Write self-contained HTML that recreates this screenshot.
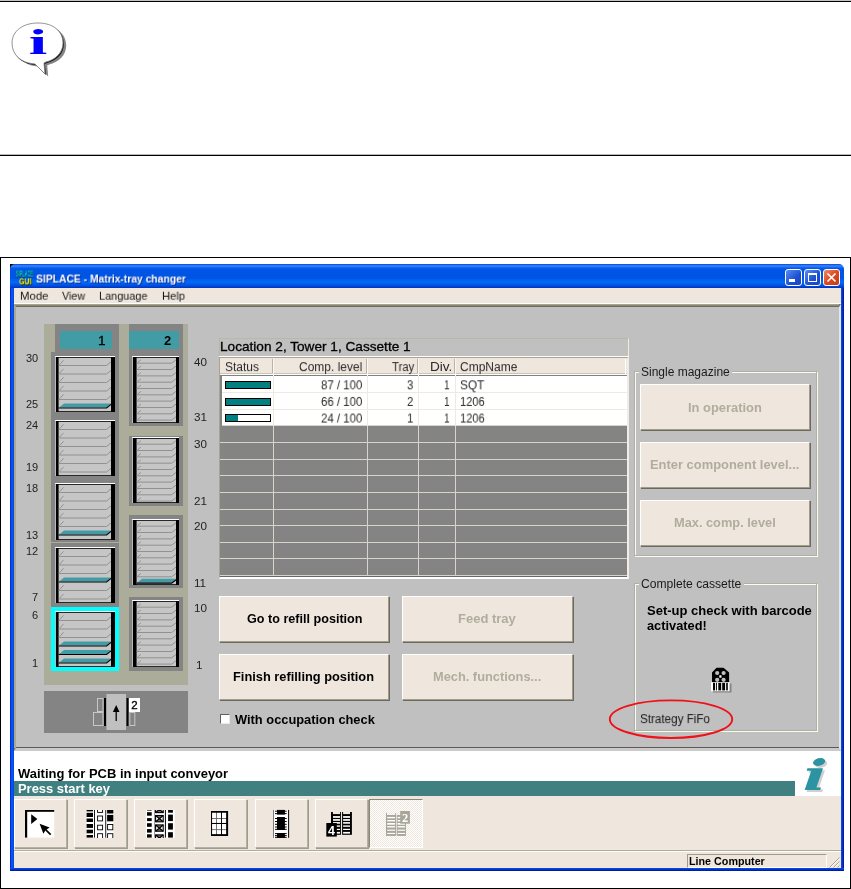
<!DOCTYPE html><html><head><meta charset="utf-8"><title>SIPLACE - Matrix-tray changer</title><style>
*{margin:0;padding:0;box-sizing:border-box}
html,body{width:851px;height:889px;background:#fff;overflow:hidden}
body{position:relative;font-family:"Liberation Sans",sans-serif;font-size:11px;color:#000}
.a{position:absolute}
.t{position:absolute;white-space:nowrap;line-height:1;will-change:transform}
.btn{position:absolute;background:#efe7de;border:1px solid;border-color:#fff #a09c8a #a09c8a #fff;box-shadow:1px 1px 0 #6e6860}
.tb{border-color:#fff #b4b0a2 #b4b0a2 #fff;box-shadow:1px 1px 0 #9e9a8c}
</style></head><body>
<div class="a" style="left:0;top:0;width:851px;height:1px;background:#c4c4c4"></div>
<div class="a" style="left:0;top:1px;width:851px;height:1px;background:#000"></div>
<div class="a" style="left:0;top:154px;width:851px;height:1px;background:#b8b8b8"></div>
<div class="a" style="left:0;top:155px;width:851px;height:1px;background:#000"></div>
<svg class="a" style="will-change:transform;left:8px;top:18px" width="64" height="62" viewBox="0 0 64 62">
<path d="M4 25 C4 13 15 5 30 5 C45 5 55 13 55 25 C55 35 47 42 38 44 L36 45 L37 56 L27 46 C13 45 4 37 4 25 Z" fill="#858585" transform="translate(3.2,2.6)"/>
<path d="M4 25 C4 13 15 5 30 5 C45 5 55 13 55 25 C55 35 47 42 38 44 L36 45 L37 56 L27 46 C13 45 4 37 4 25 Z" fill="#111" transform="translate(0.9,0.9)"/>
<path d="M4 25 C4 13 15 5 30 5 C45 5 55 13 55 25 C55 35 47 42 38 44 L36 45 L37 56 L27 46 C13 45 4 37 4 25 Z" fill="#fff" stroke="#777" stroke-width="0.8"/>
<text transform="translate(30,35.8) scale(1.9,1)" x="0" y="0" font-family="Liberation Serif,serif" font-weight="bold" font-size="35" fill="#0000ff" text-anchor="middle">i</text>
</svg>
<div class="a" style="left:0;top:257px;width:851px;height:632px;border:1px solid #000"></div>
<div class="a" style="left:10px;top:264px;width:834px;height:607px;background:#0a44e2"></div>
<div class="a" style="left:10px;top:264px;width:4px;height:607px;background:linear-gradient(90deg,#0019cf,#0a5cf5 45%,#0044e0)"></div>
<div class="a" style="left:841px;top:264px;width:3px;height:607px;background:linear-gradient(90deg,#0a50ee,#0030c8 55%,#00138c)"></div>
<div class="a" style="left:10px;top:868px;width:834px;height:3px;background:linear-gradient(#0a50ee,#0030c8 55%,#00138c)"></div>
<div class="a" style="left:10px;top:264px;width:6px;height:6px;background:#000"></div>
<div class="a" style="left:838px;top:264px;width:6px;height:6px;background:#fff"></div>
<div class="a" style="left:10px;top:264px;width:834px;height:24px;border-radius:5px 5px 0 0;background:linear-gradient(#0a48d8 0,#1c60ee 4%,#3a8cff 8%,#1468f0 14%,#0055e5 21%,#0054e3 60%,#0060f0 65%,#0468f6 76%,#005ae8 85%,#0048d8 93%,#0030c0 100%)"></div>
<div class="t" style="top:268px;line-height:10px;font-size:9px;color:#10d0a8;font-weight:bold;left:16.00px;transform-origin:0 50%;transform:translateY(0.52px) scaleX(0.4358);text-shadow:0.5px 0.5px 0 #003a60;">SIPLACE</div>
<div class="t" style="top:276px;line-height:10px;font-size:8.5px;color:#f0f000;font-weight:bold;left:18.60px;transform-origin:0 50%;transform:translateY(0.34px) scaleX(0.8206);text-shadow:0.7px 0.7px 0 #202000;">GUI</div>
<div class="t" style="top:272px;line-height:12px;font-size:11px;color:#fff;font-weight:bold;left:36.20px;transform-origin:0 50%;transform:translateY(0.54px) scaleX(0.9390);text-shadow:1px 1px 0 #0a2a90;">SIPLACE - Matrix-tray changer</div>
<div class="a" style="left:785px;top:269px;width:17px;height:17px;border:1px solid #fff;border-radius:3px;background:linear-gradient(135deg,#5a8cf4,#1c4fd2 60%,#1a48c0)"><div class="a" style="left:3px;top:9px;width:6px;height:3px;background:#fff"></div></div>
<div class="a" style="left:804px;top:269px;width:17px;height:17px;border:1px solid #fff;border-radius:3px;background:linear-gradient(135deg,#5a8cf4,#1c4fd2 60%,#1a48c0)"><div class="a" style="left:3px;top:2.5px;width:9px;height:9px;border:1px solid #fff;border-top-width:2.5px"></div></div>
<div class="a" style="left:823px;top:269px;width:17px;height:17px;border:1px solid #fff;border-radius:3px;background:linear-gradient(135deg,#f08a64,#dc4a22 50%,#c43a14)"><svg class="a" style="will-change:transform;left:0;top:0" width="15" height="15"><path d="M3.5 3.5 L11.5 11.5 M11.5 3.5 L3.5 11.5" stroke="#fff" stroke-width="1.7"/></svg></div>
<div class="a" style="left:14px;top:288px;width:827px;height:15px;background:#efe7de"></div>
<div class="t" style="top:289px;line-height:12px;font-size:11.5px;color:#151515;left:20.00px;transform-origin:0 50%;transform:translateY(0.72px) scaleX(0.9908);">Mode</div>
<div class="t" style="top:289px;line-height:12px;font-size:11.5px;color:#151515;left:62.00px;transform-origin:0 50%;transform:translateY(0.72px) scaleX(0.9305);">View</div>
<div class="t" style="top:289px;line-height:12px;font-size:11.5px;color:#151515;left:98.50px;transform-origin:0 50%;transform:translateY(0.72px) scaleX(0.9480);">Language</div>
<div class="t" style="top:289px;line-height:12px;font-size:11.5px;color:#151515;left:162.00px;transform-origin:0 50%;transform:translateY(0.72px) scaleX(0.9725);">Help</div>
<div class="a" style="left:14px;top:303px;width:827px;height:1px;background:#fff"></div>
<div class="a" style="left:14px;top:304px;width:827px;height:447px;background:#c0c0c0;border-style:solid;border-color:#7c7868 #e6e6e6 #cacaca #827e6e;border-width:3px 2px 3px 2.5px"></div>
<div class="a" style="left:14px;top:304px;width:1.5px;height:444px;background:#aca890"></div>
<div class="a" style="left:14px;top:304px;width:825px;height:1px;background:#a8a490"></div>
<div class="a" style="left:15px;top:305px;width:824px;height:1px;background:#8c8878"></div>
<div class="a" style="left:16px;top:306px;width:823px;height:1px;background:#706a60"></div>
<div class="a" style="left:16px;top:747px;width:823px;height:1px;background:#5e5858"></div>
<div class="a" style="left:44px;top:324px;width:144px;height:361px;background:#acac9a"></div>
<div class="a" style="left:55px;top:324px;width:64px;height:30px;background:#848484"></div>
<div class="a" style="left:51px;top:352px;width:68px;height:190px;background:#848484"></div>
<div class="a" style="left:51px;top:543px;width:68px;height:65px;background:#848484"></div>
<div class="a" style="left:129px;top:324px;width:54px;height:102px;background:#848484"></div>
<div class="a" style="left:129px;top:436px;width:54px;height:70px;background:#848484"></div>
<div class="a" style="left:129px;top:515px;width:54px;height:73px;background:#848484"></div>
<div class="a" style="left:129px;top:597px;width:54px;height:74px;background:#848484"></div>
<div class="a" style="left:51px;top:607px;width:68px;height:64px;background:#00ffff"></div>
<div class="a" style="left:60px;top:331px;width:52px;height:18px;background:#429ca5"></div>
<div class="a" style="left:129px;top:331px;width:50px;height:18px;background:#429ca5"></div>
<div class="t" style="top:333px;line-height:15px;font-size:13.5px;color:#000;left:97.60px;transform-origin:0 50%;transform:translateY(0.33px) scaleX(1.0000);-webkit-text-stroke:0.3px #000;">1</div>
<div class="t" style="top:333px;line-height:15px;font-size:13px;color:#000;font-weight:bold;left:164.00px;transform-origin:0 50%;transform:translateY(0.15px) scaleX(1.0000);">2</div>
<svg class="a" style="will-change:transform;left:55px;top:356px" width="60" height="56" viewBox="0 0 60 56"><rect x="0" y="0" width="60" height="56" fill="#000"/><rect x="0" y="0" width="60" height="1" fill="#fff"/><rect x="0" y="0" width="0.8" height="56" fill="#e8e8e8"/><rect x="3.6" y="1.8" width="52.4" height="53.4" fill="#c6c6c6"/><path d="M3.6 9.5 L51.6 9.5 L56.0 5.9" stroke="#848484" stroke-width="0.8" fill="none"/><path d="M4.6 8.7 L8.6 4.3" stroke="#7c7c7c" stroke-width="0.7" fill="none"/><path d="M3.6 18.0 L51.6 18.0 L56.0 14.4" stroke="#848484" stroke-width="0.8" fill="none"/><path d="M4.6 17.2 L8.6 12.8" stroke="#7c7c7c" stroke-width="0.7" fill="none"/><path d="M3.6 26.5 L51.6 26.5 L56.0 22.9" stroke="#848484" stroke-width="0.8" fill="none"/><path d="M4.6 25.7 L8.6 21.3" stroke="#7c7c7c" stroke-width="0.7" fill="none"/><path d="M3.6 35.0 L51.6 35.0 L56.0 31.4" stroke="#848484" stroke-width="0.8" fill="none"/><path d="M4.6 34.2 L8.6 29.8" stroke="#7c7c7c" stroke-width="0.7" fill="none"/><path d="M3.6 43.5 L51.6 43.5 L56.0 39.9" stroke="#848484" stroke-width="0.8" fill="none"/><path d="M4.6 42.7 L8.6 38.3" stroke="#7c7c7c" stroke-width="0.7" fill="none"/><path d="M4.1 51.6 L9.0 47.4 L56.0 47.4 L51.6 51.6 Z" fill="#429ca5"/><path d="M3.6 52.0 L51.6 52.0 L56.0 48.4" stroke="#000" stroke-width="1.2" fill="none"/></svg>
<svg class="a" style="will-change:transform;left:55px;top:420px" width="60" height="56" viewBox="0 0 60 56"><rect x="0" y="0" width="60" height="56" fill="#000"/><rect x="0" y="0" width="60" height="1" fill="#fff"/><rect x="0" y="0" width="0.8" height="56" fill="#e8e8e8"/><rect x="3.6" y="1.8" width="52.4" height="53.4" fill="#c6c6c6"/><path d="M3.6 9.5 L51.6 9.5 L56.0 5.9" stroke="#848484" stroke-width="0.8" fill="none"/><path d="M4.6 8.7 L8.6 4.3" stroke="#7c7c7c" stroke-width="0.7" fill="none"/><path d="M3.6 18.0 L51.6 18.0 L56.0 14.4" stroke="#848484" stroke-width="0.8" fill="none"/><path d="M4.6 17.2 L8.6 12.8" stroke="#7c7c7c" stroke-width="0.7" fill="none"/><path d="M3.6 26.5 L51.6 26.5 L56.0 22.9" stroke="#848484" stroke-width="0.8" fill="none"/><path d="M4.6 25.7 L8.6 21.3" stroke="#7c7c7c" stroke-width="0.7" fill="none"/><path d="M3.6 35.0 L51.6 35.0 L56.0 31.4" stroke="#848484" stroke-width="0.8" fill="none"/><path d="M4.6 34.2 L8.6 29.8" stroke="#7c7c7c" stroke-width="0.7" fill="none"/><path d="M3.6 43.5 L51.6 43.5 L56.0 39.9" stroke="#848484" stroke-width="0.8" fill="none"/><path d="M4.6 42.7 L8.6 38.3" stroke="#7c7c7c" stroke-width="0.7" fill="none"/><path d="M3.6 52.0 L51.6 52.0 L56.0 48.4" stroke="#848484" stroke-width="0.8" fill="none"/><path d="M4.6 51.2 L8.6 46.8" stroke="#7c7c7c" stroke-width="0.7" fill="none"/></svg>
<svg class="a" style="will-change:transform;left:55px;top:483px" width="60" height="57" viewBox="0 0 60 57"><rect x="0" y="0" width="60" height="57" fill="#000"/><rect x="0" y="0" width="60" height="1" fill="#fff"/><rect x="0" y="0" width="0.8" height="57" fill="#e8e8e8"/><rect x="3.6" y="1.8" width="52.4" height="54.4" fill="#c6c6c6"/><path d="M3.6 9.5 L51.6 9.5 L56.0 5.9" stroke="#848484" stroke-width="0.8" fill="none"/><path d="M4.6 8.7 L8.6 4.3" stroke="#7c7c7c" stroke-width="0.7" fill="none"/><path d="M3.6 18.0 L51.6 18.0 L56.0 14.4" stroke="#848484" stroke-width="0.8" fill="none"/><path d="M4.6 17.2 L8.6 12.8" stroke="#7c7c7c" stroke-width="0.7" fill="none"/><path d="M3.6 26.5 L51.6 26.5 L56.0 22.9" stroke="#848484" stroke-width="0.8" fill="none"/><path d="M4.6 25.7 L8.6 21.3" stroke="#7c7c7c" stroke-width="0.7" fill="none"/><path d="M3.6 35.0 L51.6 35.0 L56.0 31.4" stroke="#848484" stroke-width="0.8" fill="none"/><path d="M4.6 34.2 L8.6 29.8" stroke="#7c7c7c" stroke-width="0.7" fill="none"/><path d="M3.6 43.5 L51.6 43.5 L56.0 39.9" stroke="#848484" stroke-width="0.8" fill="none"/><path d="M4.6 42.7 L8.6 38.3" stroke="#7c7c7c" stroke-width="0.7" fill="none"/><path d="M4.1 51.6 L9.0 47.4 L56.0 47.4 L51.6 51.6 Z" fill="#429ca5"/><path d="M3.6 52.0 L51.6 52.0 L56.0 48.4" stroke="#000" stroke-width="1.2" fill="none"/></svg>
<svg class="a" style="will-change:transform;left:55px;top:547px" width="60" height="56" viewBox="0 0 60 56"><rect x="0" y="0" width="60" height="56" fill="#000"/><rect x="0" y="0" width="60" height="1" fill="#fff"/><rect x="0" y="0" width="0.8" height="56" fill="#e8e8e8"/><rect x="3.6" y="1.8" width="52.4" height="53.4" fill="#c6c6c6"/><path d="M3.6 9.5 L51.6 9.5 L56.0 5.9" stroke="#848484" stroke-width="0.8" fill="none"/><path d="M4.6 8.7 L8.6 4.3" stroke="#7c7c7c" stroke-width="0.7" fill="none"/><path d="M3.6 18.0 L51.6 18.0 L56.0 14.4" stroke="#848484" stroke-width="0.8" fill="none"/><path d="M4.6 17.2 L8.6 12.8" stroke="#7c7c7c" stroke-width="0.7" fill="none"/><path d="M3.6 26.5 L51.6 26.5 L56.0 22.9" stroke="#848484" stroke-width="0.8" fill="none"/><path d="M4.6 25.7 L8.6 21.3" stroke="#7c7c7c" stroke-width="0.7" fill="none"/><path d="M4.1 34.6 L9.0 30.4 L56.0 30.4 L51.6 34.6 Z" fill="#429ca5"/><path d="M3.6 35.0 L51.6 35.0 L56.0 31.4" stroke="#000" stroke-width="1.2" fill="none"/><path d="M3.6 43.5 L51.6 43.5 L56.0 39.9" stroke="#848484" stroke-width="0.8" fill="none"/><path d="M4.6 42.7 L8.6 38.3" stroke="#7c7c7c" stroke-width="0.7" fill="none"/><path d="M3.6 52.0 L51.6 52.0 L56.0 48.4" stroke="#848484" stroke-width="0.8" fill="none"/><path d="M4.6 51.2 L8.6 46.8" stroke="#7c7c7c" stroke-width="0.7" fill="none"/></svg>
<svg class="a" style="will-change:transform;left:55px;top:611px" width="60" height="56" viewBox="0 0 60 56"><rect x="0" y="0" width="60" height="56" fill="#000"/><rect x="0" y="0" width="60" height="1" fill="#fff"/><rect x="0" y="0" width="0.8" height="56" fill="#e8e8e8"/><rect x="3.6" y="1.8" width="52.4" height="53.4" fill="#c6c6c6"/><path d="M3.6 9.5 L51.6 9.5 L56.0 5.9" stroke="#848484" stroke-width="0.8" fill="none"/><path d="M4.6 8.7 L8.6 4.3" stroke="#7c7c7c" stroke-width="0.7" fill="none"/><path d="M3.6 18.0 L51.6 18.0 L56.0 14.4" stroke="#848484" stroke-width="0.8" fill="none"/><path d="M4.6 17.2 L8.6 12.8" stroke="#7c7c7c" stroke-width="0.7" fill="none"/><path d="M3.6 26.5 L51.6 26.5 L56.0 22.9" stroke="#848484" stroke-width="0.8" fill="none"/><path d="M4.6 25.7 L8.6 21.3" stroke="#7c7c7c" stroke-width="0.7" fill="none"/><path d="M4.1 34.6 L9.0 30.4 L56.0 30.4 L51.6 34.6 Z" fill="#429ca5"/><path d="M3.6 35.0 L51.6 35.0 L56.0 31.4" stroke="#000" stroke-width="1.2" fill="none"/><path d="M4.1 43.1 L9.0 38.9 L56.0 38.9 L51.6 43.1 Z" fill="#429ca5"/><path d="M3.6 43.5 L51.6 43.5 L56.0 39.9" stroke="#000" stroke-width="1.2" fill="none"/><path d="M4.1 51.6 L9.0 47.4 L56.0 47.4 L51.6 51.6 Z" fill="#429ca5"/><path d="M3.6 52.0 L51.6 52.0 L56.0 48.4" stroke="#000" stroke-width="1.2" fill="none"/></svg>
<svg class="a" style="will-change:transform;left:132px;top:356px" width="47" height="67" viewBox="0 0 47 67"><rect x="0" y="0" width="47" height="67" fill="#000"/><rect x="0" y="0" width="47" height="1" fill="#fff"/><rect x="0" y="0" width="0.8" height="67" fill="#e8e8e8"/><rect x="4.6" y="1.8" width="39.4" height="64.4" fill="#c6c6c6"/><path d="M4.6 7.2 L39.7 7.2 L44.0 3.8" stroke="#848484" stroke-width="0.8" fill="none"/><path d="M5.6 6.4 L8.9 3.8" stroke="#7c7c7c" stroke-width="0.7" fill="none"/><path d="M4.6 13.5 L39.7 13.5 L44.0 10.1" stroke="#848484" stroke-width="0.8" fill="none"/><path d="M5.6 12.7 L8.9 10.1" stroke="#7c7c7c" stroke-width="0.7" fill="none"/><path d="M4.6 19.9 L39.7 19.9 L44.0 16.5" stroke="#848484" stroke-width="0.8" fill="none"/><path d="M5.6 19.1 L8.9 16.5" stroke="#7c7c7c" stroke-width="0.7" fill="none"/><path d="M4.6 26.2 L39.7 26.2 L44.0 22.8" stroke="#848484" stroke-width="0.8" fill="none"/><path d="M5.6 25.4 L8.9 22.8" stroke="#7c7c7c" stroke-width="0.7" fill="none"/><path d="M4.6 32.5 L39.7 32.5 L44.0 29.1" stroke="#848484" stroke-width="0.8" fill="none"/><path d="M5.6 31.7 L8.9 29.1" stroke="#7c7c7c" stroke-width="0.7" fill="none"/><path d="M4.6 38.8 L39.7 38.8 L44.0 35.4" stroke="#848484" stroke-width="0.8" fill="none"/><path d="M5.6 38.0 L8.9 35.4" stroke="#7c7c7c" stroke-width="0.7" fill="none"/><path d="M4.6 45.1 L39.7 45.1 L44.0 41.7" stroke="#848484" stroke-width="0.8" fill="none"/><path d="M5.6 44.3 L8.9 41.7" stroke="#7c7c7c" stroke-width="0.7" fill="none"/><path d="M4.6 51.5 L39.7 51.5 L44.0 48.1" stroke="#848484" stroke-width="0.8" fill="none"/><path d="M5.6 50.7 L8.9 48.1" stroke="#7c7c7c" stroke-width="0.7" fill="none"/><path d="M4.6 57.8 L39.7 57.8 L44.0 54.4" stroke="#848484" stroke-width="0.8" fill="none"/><path d="M5.6 57.0 L8.9 54.4" stroke="#7c7c7c" stroke-width="0.7" fill="none"/><path d="M4.6 64.1 L39.7 64.1 L44.0 60.7" stroke="#848484" stroke-width="0.8" fill="none"/><path d="M5.6 63.3 L8.9 60.7" stroke="#7c7c7c" stroke-width="0.7" fill="none"/></svg>
<svg class="a" style="will-change:transform;left:132px;top:437px" width="47" height="66" viewBox="0 0 47 66"><rect x="0" y="0" width="47" height="66" fill="#000"/><rect x="0" y="0" width="47" height="1" fill="#fff"/><rect x="0" y="0" width="0.8" height="66" fill="#e8e8e8"/><rect x="4.6" y="1.8" width="39.4" height="63.4" fill="#c6c6c6"/><path d="M4.6 7.2 L39.7 7.2 L44.0 3.8" stroke="#848484" stroke-width="0.8" fill="none"/><path d="M5.6 6.4 L8.9 3.8" stroke="#7c7c7c" stroke-width="0.7" fill="none"/><path d="M4.6 13.5 L39.7 13.5 L44.0 10.1" stroke="#848484" stroke-width="0.8" fill="none"/><path d="M5.6 12.7 L8.9 10.1" stroke="#7c7c7c" stroke-width="0.7" fill="none"/><path d="M4.6 19.9 L39.7 19.9 L44.0 16.5" stroke="#848484" stroke-width="0.8" fill="none"/><path d="M5.6 19.1 L8.9 16.5" stroke="#7c7c7c" stroke-width="0.7" fill="none"/><path d="M4.6 26.2 L39.7 26.2 L44.0 22.8" stroke="#848484" stroke-width="0.8" fill="none"/><path d="M5.6 25.4 L8.9 22.8" stroke="#7c7c7c" stroke-width="0.7" fill="none"/><path d="M4.6 32.5 L39.7 32.5 L44.0 29.1" stroke="#848484" stroke-width="0.8" fill="none"/><path d="M5.6 31.7 L8.9 29.1" stroke="#7c7c7c" stroke-width="0.7" fill="none"/><path d="M4.6 38.8 L39.7 38.8 L44.0 35.4" stroke="#848484" stroke-width="0.8" fill="none"/><path d="M5.6 38.0 L8.9 35.4" stroke="#7c7c7c" stroke-width="0.7" fill="none"/><path d="M4.6 45.1 L39.7 45.1 L44.0 41.7" stroke="#848484" stroke-width="0.8" fill="none"/><path d="M5.6 44.3 L8.9 41.7" stroke="#7c7c7c" stroke-width="0.7" fill="none"/><path d="M4.6 51.5 L39.7 51.5 L44.0 48.1" stroke="#848484" stroke-width="0.8" fill="none"/><path d="M5.6 50.7 L8.9 48.1" stroke="#7c7c7c" stroke-width="0.7" fill="none"/><path d="M4.6 57.8 L39.7 57.8 L44.0 54.4" stroke="#848484" stroke-width="0.8" fill="none"/><path d="M5.6 57.0 L8.9 54.4" stroke="#7c7c7c" stroke-width="0.7" fill="none"/><path d="M4.6 64.1 L39.7 64.1 L44.0 60.7" stroke="#848484" stroke-width="0.8" fill="none"/><path d="M5.6 63.3 L8.9 60.7" stroke="#7c7c7c" stroke-width="0.7" fill="none"/></svg>
<svg class="a" style="will-change:transform;left:132px;top:519px" width="47" height="66" viewBox="0 0 47 66"><rect x="0" y="0" width="47" height="66" fill="#000"/><rect x="0" y="0" width="47" height="1" fill="#fff"/><rect x="0" y="0" width="0.8" height="66" fill="#e8e8e8"/><rect x="4.6" y="1.8" width="39.4" height="63.4" fill="#c6c6c6"/><path d="M4.6 7.2 L39.7 7.2 L44.0 3.8" stroke="#848484" stroke-width="0.8" fill="none"/><path d="M5.6 6.4 L8.9 3.8" stroke="#7c7c7c" stroke-width="0.7" fill="none"/><path d="M4.6 13.5 L39.7 13.5 L44.0 10.1" stroke="#848484" stroke-width="0.8" fill="none"/><path d="M5.6 12.7 L8.9 10.1" stroke="#7c7c7c" stroke-width="0.7" fill="none"/><path d="M4.6 19.9 L39.7 19.9 L44.0 16.5" stroke="#848484" stroke-width="0.8" fill="none"/><path d="M5.6 19.1 L8.9 16.5" stroke="#7c7c7c" stroke-width="0.7" fill="none"/><path d="M4.6 26.2 L39.7 26.2 L44.0 22.8" stroke="#848484" stroke-width="0.8" fill="none"/><path d="M5.6 25.4 L8.9 22.8" stroke="#7c7c7c" stroke-width="0.7" fill="none"/><path d="M4.6 32.5 L39.7 32.5 L44.0 29.1" stroke="#848484" stroke-width="0.8" fill="none"/><path d="M5.6 31.7 L8.9 29.1" stroke="#7c7c7c" stroke-width="0.7" fill="none"/><path d="M4.6 38.8 L39.7 38.8 L44.0 35.4" stroke="#848484" stroke-width="0.8" fill="none"/><path d="M5.6 38.0 L8.9 35.4" stroke="#7c7c7c" stroke-width="0.7" fill="none"/><path d="M4.6 45.1 L39.7 45.1 L44.0 41.7" stroke="#848484" stroke-width="0.8" fill="none"/><path d="M5.6 44.3 L8.9 41.7" stroke="#7c7c7c" stroke-width="0.7" fill="none"/><path d="M4.6 51.5 L39.7 51.5 L44.0 48.1" stroke="#848484" stroke-width="0.8" fill="none"/><path d="M5.6 50.7 L8.9 48.1" stroke="#7c7c7c" stroke-width="0.7" fill="none"/><path d="M4.6 57.8 L39.7 57.8 L44.0 54.4" stroke="#848484" stroke-width="0.8" fill="none"/><path d="M5.6 57.0 L8.9 54.4" stroke="#7c7c7c" stroke-width="0.7" fill="none"/><path d="M5.1 63.7 L9.9 59.7 L44.0 59.7 L39.7 63.7 Z" fill="#429ca5"/><path d="M4.6 64.1 L39.7 64.1 L44.0 60.7" stroke="#000" stroke-width="1.2" fill="none"/></svg>
<svg class="a" style="will-change:transform;left:132px;top:600px" width="47" height="67" viewBox="0 0 47 67"><rect x="0" y="0" width="47" height="67" fill="#000"/><rect x="0" y="0" width="47" height="1" fill="#fff"/><rect x="0" y="0" width="0.8" height="67" fill="#e8e8e8"/><rect x="4.6" y="1.8" width="39.4" height="64.4" fill="#c6c6c6"/><path d="M4.6 7.2 L39.7 7.2 L44.0 3.8" stroke="#848484" stroke-width="0.8" fill="none"/><path d="M5.6 6.4 L8.9 3.8" stroke="#7c7c7c" stroke-width="0.7" fill="none"/><path d="M4.6 13.5 L39.7 13.5 L44.0 10.1" stroke="#848484" stroke-width="0.8" fill="none"/><path d="M5.6 12.7 L8.9 10.1" stroke="#7c7c7c" stroke-width="0.7" fill="none"/><path d="M4.6 19.9 L39.7 19.9 L44.0 16.5" stroke="#848484" stroke-width="0.8" fill="none"/><path d="M5.6 19.1 L8.9 16.5" stroke="#7c7c7c" stroke-width="0.7" fill="none"/><path d="M4.6 26.2 L39.7 26.2 L44.0 22.8" stroke="#848484" stroke-width="0.8" fill="none"/><path d="M5.6 25.4 L8.9 22.8" stroke="#7c7c7c" stroke-width="0.7" fill="none"/><path d="M4.6 32.5 L39.7 32.5 L44.0 29.1" stroke="#848484" stroke-width="0.8" fill="none"/><path d="M5.6 31.7 L8.9 29.1" stroke="#7c7c7c" stroke-width="0.7" fill="none"/><path d="M4.6 38.8 L39.7 38.8 L44.0 35.4" stroke="#848484" stroke-width="0.8" fill="none"/><path d="M5.6 38.0 L8.9 35.4" stroke="#7c7c7c" stroke-width="0.7" fill="none"/><path d="M4.6 45.1 L39.7 45.1 L44.0 41.7" stroke="#848484" stroke-width="0.8" fill="none"/><path d="M5.6 44.3 L8.9 41.7" stroke="#7c7c7c" stroke-width="0.7" fill="none"/><path d="M4.6 51.5 L39.7 51.5 L44.0 48.1" stroke="#848484" stroke-width="0.8" fill="none"/><path d="M5.6 50.7 L8.9 48.1" stroke="#7c7c7c" stroke-width="0.7" fill="none"/><path d="M4.6 57.8 L39.7 57.8 L44.0 54.4" stroke="#848484" stroke-width="0.8" fill="none"/><path d="M5.6 57.0 L8.9 54.4" stroke="#7c7c7c" stroke-width="0.7" fill="none"/><path d="M4.6 64.1 L39.7 64.1 L44.0 60.7" stroke="#848484" stroke-width="0.8" fill="none"/><path d="M5.6 63.3 L8.9 60.7" stroke="#7c7c7c" stroke-width="0.7" fill="none"/></svg>
<div class="t" style="top:352px;line-height:12px;font-size:11px;color:#222;right:812.40px;transform-origin:100% 50%;transform:translateY(0.34px) scaleX(1.0000);">30</div>
<div class="t" style="top:398px;line-height:12px;font-size:11px;color:#222;right:812.40px;transform-origin:100% 50%;transform:translateY(0.24px) scaleX(1.0000);">25</div>
<div class="t" style="top:418px;line-height:12px;font-size:11px;color:#222;right:812.40px;transform-origin:100% 50%;transform:translateY(0.54px) scaleX(1.0000);">24</div>
<div class="t" style="top:461px;line-height:12px;font-size:11px;color:#222;right:812.40px;transform-origin:100% 50%;transform:translateY(0.24px) scaleX(1.0000);">19</div>
<div class="t" style="top:482px;line-height:12px;font-size:11px;color:#222;right:812.40px;transform-origin:100% 50%;transform:translateY(0.34px) scaleX(1.0000);">18</div>
<div class="t" style="top:529px;line-height:12px;font-size:11px;color:#222;right:812.40px;transform-origin:100% 50%;transform:translateY(0.04px) scaleX(1.0000);">13</div>
<div class="t" style="top:544px;line-height:12px;font-size:11px;color:#222;right:812.40px;transform-origin:100% 50%;transform:translateY(0.64px) scaleX(1.0000);">12</div>
<div class="t" style="top:590px;line-height:12px;font-size:11px;color:#222;right:812.40px;transform-origin:100% 50%;transform:translateY(0.94px) scaleX(1.0000);">7</div>
<div class="t" style="top:609px;line-height:12px;font-size:11px;color:#222;right:812.40px;transform-origin:100% 50%;transform:translateY(0.44px) scaleX(1.0000);">6</div>
<div class="t" style="top:657px;line-height:12px;font-size:11px;color:#222;right:812.40px;transform-origin:100% 50%;transform:translateY(0.04px) scaleX(1.0000);">1</div>
<div class="t" style="top:355px;line-height:12px;font-size:11px;color:#222;left:194.30px;transform-origin:0 50%;transform:translateY(0.74px) scaleX(1.0600);">40</div>
<div class="t" style="top:411px;line-height:12px;font-size:11px;color:#222;left:194.30px;transform-origin:0 50%;transform:translateY(0.04px) scaleX(1.0600);">31</div>
<div class="t" style="top:437px;line-height:12px;font-size:11px;color:#222;left:194.30px;transform-origin:0 50%;transform:translateY(0.64px) scaleX(1.0600);">30</div>
<div class="t" style="top:494px;line-height:12px;font-size:11px;color:#222;left:194.30px;transform-origin:0 50%;transform:translateY(0.54px) scaleX(1.0600);">21</div>
<div class="t" style="top:520px;line-height:12px;font-size:11px;color:#222;left:194.30px;transform-origin:0 50%;transform:translateY(0.04px) scaleX(1.0600);">20</div>
<div class="t" style="top:576px;line-height:12px;font-size:11px;color:#222;left:194.30px;transform-origin:0 50%;transform:translateY(0.94px) scaleX(1.0600);">11</div>
<div class="t" style="top:601px;line-height:12px;font-size:11px;color:#222;left:194.30px;transform-origin:0 50%;transform:translateY(0.84px) scaleX(1.0600);">10</div>
<div class="t" style="top:658px;line-height:12px;font-size:11px;color:#222;left:196.30px;transform-origin:0 50%;transform:translateY(0.94px) scaleX(1.0600);">1</div>
<div class="a" style="left:44px;top:691px;width:144px;height:42px;background:#848484"></div>
<svg class="a" style="will-change:transform;left:90px;top:692px" width="54" height="40" viewBox="0 0 54 40">
<rect x="16.5" y="2" width="19.5" height="36" fill="#c0c0c0"/>
<rect x="14" y="6" width="2" height="28" fill="#000"/>
<rect x="36.5" y="6" width="2" height="28" fill="#000"/>
<rect x="7.5" y="6.5" width="5.5" height="13" fill="none" stroke="#c8c8c8" stroke-width="1"/>
<rect x="3.5" y="20.5" width="9.5" height="13" fill="none" stroke="#c8c8c8" stroke-width="1"/>
<rect x="39.8" y="20.5" width="5" height="13" fill="none" stroke="#c8c8c8" stroke-width="1"/>
<rect x="39" y="6" width="11" height="14" fill="#fff"/>
<path d="M26.2 29 L26.2 17" stroke="#000" stroke-width="1.3"/>
<path d="M26.2 13 L29.5 20 L22.9 20 Z" fill="#000"/>
<text x="44.5" y="16.6" font-family="Liberation Sans,sans-serif" font-size="11.5" stroke="#000" stroke-width="0.3" text-anchor="middle" fill="#000">2</text>
</svg>
<div class="a" style="left:219px;top:338px;width:410px;height:19px;border:1px solid;border-color:#b8b8a4 #ecece4 #fff #b8b8a4;border-bottom:none"></div>
<div class="t" style="top:338px;line-height:15px;font-size:13px;color:#000;left:220.40px;transform-origin:0 50%;transform:translateY(0.65px) scaleX(1.0481);-webkit-text-stroke:0.3px #000;">Location 2, Tower 1, Cassette 1</div>
<div class="a" style="left:219px;top:356px;width:410px;height:1px;background:#fff"></div>
<div class="a" style="left:219px;top:357px;width:410px;height:222px;background:#848484;border:1px solid #f0f0e8;border-top-color:#a8a490;border-left-color:#a8a490;border-right:2px solid #f2ece6;border-bottom:2px solid #fff"></div>
<div class="a" style="left:220px;top:576px;width:407px;height:1px;background:#6c6666"></div>
<div class="a" style="left:220px;top:358px;width:407px;height:16px;background:#efe7de;border-bottom:1px solid #cac6b4"></div>
<div class="a" style="left:220px;top:374px;width:407px;height:1px;background:#fff"></div>
<div class="a" style="left:220px;top:375px;width:405px;height:1px;background:#808080"></div>
<div class="a" style="left:220px;top:376px;width:407px;height:50px;background:#fff"></div>
<div class="a" style="left:220px;top:392.1px;width:407px;height:1px;background:#efe9e2"></div>
<div class="a" style="left:220px;top:408.7px;width:407px;height:1px;background:#efe9e2"></div>
<div class="a" style="left:220px;top:425.4px;width:407px;height:1px;background:#d8d4cc"></div>
<div class="a" style="left:220px;top:442.0px;width:407px;height:1px;background:#d8d4cc"></div>
<div class="a" style="left:220px;top:458.6px;width:407px;height:1px;background:#d8d4cc"></div>
<div class="a" style="left:220px;top:475.2px;width:407px;height:1px;background:#d8d4cc"></div>
<div class="a" style="left:220px;top:491.8px;width:407px;height:1px;background:#d8d4cc"></div>
<div class="a" style="left:220px;top:508.5px;width:407px;height:1px;background:#d8d4cc"></div>
<div class="a" style="left:220px;top:525.1px;width:407px;height:1px;background:#d8d4cc"></div>
<div class="a" style="left:220px;top:541.7px;width:407px;height:1px;background:#d8d4cc"></div>
<div class="a" style="left:220px;top:558.3px;width:407px;height:1px;background:#d8d4cc"></div>
<div class="a" style="left:220px;top:574.9px;width:407px;height:1px;background:#d8d4cc"></div>
<div class="a" style="left:273px;top:376px;width:1px;height:50px;background:#efe9e2"></div>
<div class="a" style="left:273px;top:426px;width:1px;height:150px;background:#d8d4cc"></div>
<div class="a" style="left:272px;top:359px;width:1px;height:14px;background:#b8b4a0"></div>
<div class="a" style="left:273px;top:359px;width:1px;height:17px;background:#faf8f4"></div>
<div class="a" style="left:367px;top:376px;width:1px;height:50px;background:#efe9e2"></div>
<div class="a" style="left:367px;top:426px;width:1px;height:150px;background:#d8d4cc"></div>
<div class="a" style="left:366px;top:359px;width:1px;height:14px;background:#b8b4a0"></div>
<div class="a" style="left:367px;top:359px;width:1px;height:17px;background:#faf8f4"></div>
<div class="a" style="left:418px;top:376px;width:1px;height:50px;background:#efe9e2"></div>
<div class="a" style="left:418px;top:426px;width:1px;height:150px;background:#d8d4cc"></div>
<div class="a" style="left:417px;top:359px;width:1px;height:14px;background:#b8b4a0"></div>
<div class="a" style="left:418px;top:359px;width:1px;height:17px;background:#faf8f4"></div>
<div class="a" style="left:455px;top:376px;width:1px;height:50px;background:#efe9e2"></div>
<div class="a" style="left:455px;top:426px;width:1px;height:150px;background:#d8d4cc"></div>
<div class="a" style="left:454px;top:359px;width:1px;height:14px;background:#b8b4a0"></div>
<div class="a" style="left:455px;top:359px;width:1px;height:17px;background:#faf8f4"></div>
<div class="a" style="left:625px;top:359px;width:1px;height:15px;background:#fff"></div>
<div class="a" style="left:220px;top:376px;width:2px;height:50px;background:#848484"></div>
<div class="t" style="top:360px;line-height:14px;font-size:12px;color:#2a2a2a;left:225.40px;transform-origin:0 50%;transform:translateY(0.10px) scaleX(0.9995);">Status</div>
<div class="t" style="top:360px;line-height:14px;font-size:12px;color:#2a2a2a;left:299.40px;transform-origin:0 50%;transform:translateY(0.10px) scaleX(0.9976);">Comp. level</div>
<div class="t" style="top:360px;line-height:14px;font-size:12px;color:#2a2a2a;left:391.50px;transform-origin:0 50%;transform:translateY(0.10px) scaleX(0.9425);">Tray</div>
<div class="t" style="top:360px;line-height:14px;font-size:12px;color:#2a2a2a;left:430.30px;transform-origin:0 50%;transform:translateY(0.10px) scaleX(1.1327);">Div.</div>
<div class="t" style="top:360px;line-height:14px;font-size:12px;color:#2a2a2a;left:460.00px;transform-origin:0 50%;transform:translateY(0.10px) scaleX(0.9992);">CmpName</div>
<div class="a" style="left:225px;top:381.0px;width:46px;height:8px;background:#fff;border:1.5px solid #000"><div style="width:100%;height:100%;background:#008080"></div></div>
<div class="t" style="top:378px;line-height:14px;font-size:12px;color:#2a2a2a;left:321.00px;transform-origin:0 50%;transform:translateY(0.30px) scaleX(0.9523);">87 / 100</div>
<div class="t" style="top:378px;line-height:14px;font-size:12px;color:#2a2a2a;left:407.30px;transform-origin:0 50%;transform:translateY(0.30px) scaleX(0.9441);">3</div>
<div class="t" style="top:378px;line-height:14px;font-size:12px;color:#2a2a2a;left:443.60px;transform-origin:0 50%;transform:translateY(0.30px) scaleX(0.8392);">1</div>
<div class="t" style="top:378px;line-height:14px;font-size:12px;color:#2a2a2a;left:460.30px;transform-origin:0 50%;transform:translateY(0.30px) scaleX(0.9851);">SQT</div>
<div class="a" style="left:225px;top:397.6px;width:46px;height:8px;background:#fff;border:1.5px solid #000"><div style="width:100%;height:100%;background:#008080"></div></div>
<div class="t" style="top:394px;line-height:14px;font-size:12px;color:#2a2a2a;left:321.00px;transform-origin:0 50%;transform:translateY(0.92px) scaleX(0.9523);">66 / 100</div>
<div class="t" style="top:394px;line-height:14px;font-size:12px;color:#2a2a2a;left:407.30px;transform-origin:0 50%;transform:translateY(0.92px) scaleX(0.9441);">2</div>
<div class="t" style="top:394px;line-height:14px;font-size:12px;color:#2a2a2a;left:443.60px;transform-origin:0 50%;transform:translateY(0.92px) scaleX(0.8392);">1</div>
<div class="t" style="top:394px;line-height:14px;font-size:12px;color:#2a2a2a;left:460.30px;transform-origin:0 50%;transform:translateY(0.92px) scaleX(0.9254);">1206</div>
<div class="a" style="left:225px;top:414.2px;width:46px;height:8px;background:#fff;border:1.5px solid #000"><div style="width:28%;height:100%;background:#008080"></div></div>
<div class="t" style="top:411px;line-height:14px;font-size:12px;color:#2a2a2a;left:321.00px;transform-origin:0 50%;transform:translateY(0.54px) scaleX(0.9523);">24 / 100</div>
<div class="t" style="top:411px;line-height:14px;font-size:12px;color:#2a2a2a;left:407.30px;transform-origin:0 50%;transform:translateY(0.54px) scaleX(0.9441);">1</div>
<div class="t" style="top:411px;line-height:14px;font-size:12px;color:#2a2a2a;left:443.60px;transform-origin:0 50%;transform:translateY(0.54px) scaleX(0.8392);">1</div>
<div class="t" style="top:411px;line-height:14px;font-size:12px;color:#2a2a2a;left:460.30px;transform-origin:0 50%;transform:translateY(0.54px) scaleX(0.9254);">1206</div>
<div class="btn" style="left:219px;top:596px;width:170px;height:46px"></div>
<div class="t" style="top:612px;line-height:14px;font-size:12.5px;color:#000;font-weight:bold;left:246.70px;transform-origin:0 50%;transform:translateY(0.27px) scaleX(1.0081);">Go to refill position</div>
<div class="btn" style="left:402px;top:596px;width:171px;height:46px"></div>
<div class="t" style="top:612px;line-height:14px;font-size:12.5px;color:#b0ad9d;font-weight:bold;left:458.40px;transform-origin:0 50%;transform:translateY(0.27px) scaleX(1.0401);">Feed tray</div>
<div class="btn" style="left:219px;top:654px;width:170px;height:46px"></div>
<div class="t" style="top:669px;line-height:14px;font-size:12.5px;color:#000;font-weight:bold;left:233.00px;transform-origin:0 50%;transform:translateY(0.98px) scaleX(1.0256);">Finish refilling position</div>
<div class="btn" style="left:402px;top:654px;width:171px;height:46px"></div>
<div class="t" style="top:669px;line-height:14px;font-size:12.5px;color:#b0ad9d;font-weight:bold;left:433.20px;transform-origin:0 50%;transform:translateY(0.98px) scaleX(1.0251);">Mech. functions...</div>
<div class="a" style="left:220px;top:714px;width:10px;height:10px;background:#fff;border:1px solid;border-color:#606060 #e8e8e8 #e8e8e8 #606060"></div>
<div class="t" style="top:713px;line-height:14px;font-size:12.5px;color:#000;font-weight:bold;left:235.20px;transform-origin:0 50%;transform:translateY(0.08px) scaleX(1.0279);">With occupation check</div>
<div class="a" style="left:634px;top:371px;width:183px;height:185px;border:1px solid #b0b0a0;box-shadow:1px 1px 0 #fafaf4, inset 1px 1px 0 #fafaf4"></div>
<div class="a" style="left:639px;top:365px;width:93px;height:12px;background:#c0c0c0"></div>
<div class="t" style="top:364px;line-height:14px;font-size:12px;color:#1a1a1a;left:641.00px;transform-origin:0 50%;transform:translateY(1.00px) scaleX(0.9964);">Single magazine</div>
<div class="btn" style="left:640px;top:384px;width:170px;height:46px"></div>
<div class="t" style="top:400px;line-height:14px;font-size:12.5px;color:#b0ad9d;font-weight:bold;left:687.90px;transform-origin:0 50%;transform:translateY(0.68px) scaleX(1.0319);">In operation</div>
<div class="btn" style="left:640px;top:442px;width:170px;height:46px"></div>
<div class="t" style="top:458px;line-height:14px;font-size:12.5px;color:#b0ad9d;font-weight:bold;left:650.40px;transform-origin:0 50%;transform:translateY(0.48px) scaleX(1.0335);">Enter component level...</div>
<div class="btn" style="left:640px;top:500px;width:170px;height:46px"></div>
<div class="t" style="top:516px;line-height:14px;font-size:12.5px;color:#b0ad9d;font-weight:bold;left:674.30px;transform-origin:0 50%;transform:translateY(0.08px) scaleX(1.0238);">Max. comp. level</div>
<div class="a" style="left:634px;top:583px;width:183px;height:148px;border:1px solid #b0b0a0;box-shadow:1px 1px 0 #fafaf4, inset 1px 1px 0 #fafaf4"></div>
<div class="a" style="left:639px;top:577px;width:105px;height:12px;background:#c0c0c0"></div>
<div class="t" style="top:576px;line-height:14px;font-size:12px;color:#1a1a1a;left:641.00px;transform-origin:0 50%;transform:translateY(0.70px) scaleX(1.0093);">Complete cassette</div>
<div class="t" style="top:603px;line-height:14px;font-size:12.5px;color:#000;font-weight:bold;left:646.60px;transform-origin:0 50%;transform:translateY(0.77px) scaleX(1.0407);">Set-up check with barcode</div>
<div class="t" style="top:618px;line-height:14px;font-size:12.5px;color:#000;font-weight:bold;left:646.60px;transform-origin:0 50%;transform:translateY(0.77px) scaleX(1.0231);">activated!</div>
<svg class="a" style="will-change:transform;left:710px;top:666px" width="23" height="28" viewBox="0 0 23 28">
<rect x="3" y="17.5" width="18.5" height="9" fill="#848484"/>
<path d="M6.5 1.7 L13.5 1.7 L19.1 6.5 L19.1 16.5 L2 16.5 L2 6.5 Z" fill="#000"/>
<circle cx="7.2" cy="7" r="2.1" fill="#c0c0c0"/><circle cx="13.6" cy="7" r="2.1" fill="#c0c0c0"/>
<circle cx="7.2" cy="13.8" r="2.1" fill="#c0c0c0"/><circle cx="13.6" cy="13.8" r="2.1" fill="#c0c0c0"/>
<rect x="9.3" y="9.3" width="2.2" height="2.4" fill="#fff"/>
<rect x="1" y="16.2" width="18.6" height="9" fill="#fff"/>
<rect x="3" y="16.8" width="2.1" height="7.6" fill="#000"/><rect x="6.1" y="16.8" width="0.9" height="7.6" fill="#000"/><rect x="8.3" y="16.8" width="2.9" height="7.6" fill="#000"/><rect x="12.2" y="16.8" width="2.9" height="7.6" fill="#000"/><rect x="16.2" y="16.8" width="1.6" height="7.6" fill="#000"/>
</svg>
<div class="t" style="top:712px;line-height:14px;font-size:12px;color:#1a1a1a;left:640.40px;transform-origin:0 50%;transform:translateY(0.10px) scaleX(0.9720);">Strategy FiFo</div>
<svg class="a" style="will-change:transform;left:600px;top:695px" width="145" height="50"><ellipse cx="71" cy="24.2" rx="61.2" ry="18.8" fill="none" stroke="#f01018" stroke-width="1.9"/></svg>
<div class="a" style="left:14px;top:751px;width:827px;height:45px;background:#fff"></div>
<div class="t" style="top:766px;line-height:14px;font-size:12.5px;color:#000;font-weight:bold;left:18.30px;transform-origin:0 50%;transform:translateY(0.98px) scaleX(1.0385);">Waiting for PCB in input conveyor</div>
<div class="a" style="left:14px;top:781px;width:781px;height:15px;background:#408080"></div>
<div class="t" style="top:781px;line-height:14px;font-size:12.5px;color:#fff;font-weight:bold;left:18.30px;transform-origin:0 50%;transform:translateY(0.88px) scaleX(1.0343);">Press start key</div>
<svg class="a" style="will-change:transform;left:796px;top:752px" width="44" height="44" viewBox="0 0 44 44">
<g transform="translate(6.4,38.2) skewX(-3) scale(1.5,1)">
<text x="1.4" y="2" font-family="DejaVu Serif,serif" font-style="italic" font-weight="bold" font-size="42" fill="#8a8a8a" opacity="0.4">i</text>
<text x="0" y="0" font-family="DejaVu Serif,serif" font-style="italic" font-weight="bold" font-size="42" fill="#2b93a1">i</text>
</g>
</svg>
<div class="a" style="left:14px;top:796px;width:827px;height:72px;background:#efe7de"></div>
<div class="a" style="left:14px;top:850px;width:827px;height:1px;background:#b0ac9c"></div>
<div class="a" style="left:14px;top:851px;width:827px;height:1px;background:#fff"></div>
<div class="btn tb" style="left:14px;top:799px;width:53px;height:49px"></div>
<div class="btn tb" style="left:74px;top:799px;width:53px;height:49px"></div>
<div class="btn tb" style="left:134px;top:799px;width:53px;height:49px"></div>
<div class="btn tb" style="left:194px;top:799px;width:53px;height:49px"></div>
<div class="btn tb" style="left:255px;top:799px;width:53px;height:49px"></div>
<div class="btn tb" style="left:315px;top:799px;width:53px;height:49px"></div>
<div class="a" style="left:369px;top:799px;width:54px;height:49px;background:repeating-conic-gradient(#fff 0 25%,#efe7de 0 50%) 0 0/2px 2px;border:1px solid;border-color:#8a8778 #fff #fff #8a8778"></div>
<svg class="a" style="will-change:transform;left:25px;top:810px" width="30" height="28" viewBox="0 0 30 28">
<rect x="0" y="0" width="29.2" height="27.6" fill="#fff"/>
<rect x="0" y="0" width="29.2" height="1.8" fill="#000"/><rect x="0" y="0" width="2.2" height="27.6" fill="#000"/>
<path d="M6.2 4.2 L12.4 9.1 L6.2 14 Z" fill="#000"/>
<path d="M14.6 13.8 L24.6 17.6 L21.6 19.4 L26.3 24 L25 25.3 L20.3 20.6 L18.4 23.8 Z" fill="#000"/>
</svg>
<svg class="a" style="will-change:transform;left:86px;top:810px" width="28" height="28" viewBox="0 0 28 28"><rect x="0.6" y="0" width="26.8" height="27.6" fill="#fff"/><rect x="0.6" y="0.0" width="6.4" height="1.4" fill="#000"/><rect x="0.6" y="2.8" width="6.4" height="4.2" fill="#000"/><rect x="0.6" y="8.5" width="6.4" height="3.5" fill="#000"/><rect x="0.6" y="14.0" width="6.4" height="3.9" fill="#000"/><rect x="0.6" y="19.7" width="6.4" height="3.6" fill="#000"/><rect x="0.6" y="25.0" width="6.4" height="2.6" fill="#000"/><rect x="8" y="0" width="0.9" height="27.6" fill="#000"/><rect x="19.3" y="0" width="0.9" height="27.6" fill="#000"/><rect x="11.6" y="-1.6" width="5" height="4.0" fill="#fff" stroke="#000" stroke-width="0.9"/><rect x="11.6" y="6.0" width="5" height="4.9" fill="#fff" stroke="#000" stroke-width="0.9"/><rect x="11.6" y="15.2" width="5" height="4.6" fill="#fff" stroke="#000" stroke-width="0.9"/><rect x="11.6" y="23.7" width="5" height="5.9" fill="#fff" stroke="#000" stroke-width="0.9"/><rect x="21.1" y="0.0" width="6.2" height="3.5" fill="#000"/><rect x="21.1" y="4.9" width="6.2" height="6.4" fill="#000"/><rect x="21.6" y="14.5" width="5.2" height="5.3" fill="#fff" stroke="#000" stroke-width="0.9"/><rect x="21.6" y="23.7" width="5.2" height="5.9" fill="#fff" stroke="#000" stroke-width="0.9"/></svg>
<svg class="a" style="will-change:transform;left:146px;top:810px" width="30" height="28" viewBox="0 0 30 28"><rect x="0" y="-0.4" width="28.6" height="28.4" fill="#fff"/><rect x="1" y="0.0" width="4.7" height="0.6" fill="#000"/><rect x="1" y="2.2" width="4.7" height="3.5" fill="#000"/><rect x="1" y="8.1" width="4.7" height="3.0" fill="#000"/><rect x="1" y="13.2" width="4.7" height="3.6" fill="#000"/><rect x="1" y="19.1" width="4.7" height="3.5" fill="#000"/><rect x="1" y="24.3" width="4.7" height="3.3" fill="#000"/><rect x="8.4" y="0" width="0.6" height="27.6" fill="#555"/><rect x="18.9" y="0" width="1" height="27.6" fill="#000"/><rect x="9.6" y="-3.7" width="7.6" height="6.3" fill="#fff" stroke="#000" stroke-width="1.1"/><path d="M9.6 -3.7 L17.2 2.6 M17.2 -3.7 L9.6 2.6" stroke="#000" stroke-width="1.3"/><path d="M9.6 -3.7 L13.4 -1.0 L17.2 -3.7 Z M9.6 2.6 L13.4 -0.1 L17.2 2.6 Z" fill="#000" opacity="0.55"/><rect x="9.6" y="5.5" width="7.6" height="6.3" fill="#fff" stroke="#000" stroke-width="1.1"/><path d="M9.6 5.5 L17.2 11.8 M17.2 5.5 L9.6 11.8" stroke="#000" stroke-width="1.3"/><path d="M9.6 5.5 L13.4 8.2 L17.2 5.5 Z M9.6 11.8 L13.4 9.1 L17.2 11.8 Z" fill="#000" opacity="0.55"/><rect x="9.6" y="14.9" width="7.6" height="6.3" fill="#fff" stroke="#000" stroke-width="1.1"/><path d="M9.6 14.9 L17.2 21.2 M17.2 14.9 L9.6 21.2" stroke="#000" stroke-width="1.3"/><path d="M9.6 14.9 L13.4 17.6 L17.2 14.9 Z M9.6 21.2 L13.4 18.5 L17.2 21.2 Z" fill="#000" opacity="0.55"/><rect x="9.6" y="24.9" width="7.6" height="6.3" fill="#fff" stroke="#000" stroke-width="1.1"/><path d="M9.6 24.9 L17.2 31.2 M17.2 24.9 L9.6 31.2" stroke="#000" stroke-width="1.3"/><path d="M9.6 24.9 L13.4 27.6 L17.2 24.9 Z M9.6 31.2 L13.4 28.5 L17.2 31.2 Z" fill="#000" opacity="0.55"/><rect x="22.1" y="0.0" width="4.8" height="2.7" fill="#000"/><rect x="22.1" y="4.6" width="4.8" height="6.5" fill="#000"/><rect x="22.1" y="13.2" width="4.8" height="6.4" fill="#000"/><rect x="22.1" y="22.2" width="4.8" height="5.4" fill="#000"/></svg>
<svg class="a" style="will-change:transform;left:210px;top:810px" width="20" height="28" viewBox="0 0 20 28"><rect x="1" y="1" width="17.1" height="25" fill="#000"/><rect x="2.1" y="2.8" width="9" height="10.1" fill="#666"/><rect x="2.1" y="14" width="9" height="10.1" fill="#666"/><rect x="12" y="2.8" width="4.1" height="10.1" fill="#666"/><rect x="12" y="14" width="4.1" height="10.1" fill="#666"/><rect x="2.1" y="2.8" width="4.0" height="5.2" fill="#fff"/><rect x="2.1" y="8.9" width="4.0" height="4.0" fill="#fff"/><rect x="2.1" y="14.0" width="4.0" height="5.2" fill="#fff"/><rect x="2.1" y="20.1" width="4.0" height="4.0" fill="#fff"/><rect x="7.0" y="2.8" width="4.0" height="5.2" fill="#fff"/><rect x="7.0" y="8.9" width="4.0" height="4.0" fill="#fff"/><rect x="7.0" y="14.0" width="4.0" height="5.2" fill="#fff"/><rect x="7.0" y="20.1" width="4.0" height="4.0" fill="#fff"/><rect x="12.0" y="2.8" width="4.1" height="5.2" fill="#fff"/><rect x="12.0" y="8.9" width="4.1" height="4.0" fill="#fff"/><rect x="12.0" y="14.0" width="4.1" height="5.2" fill="#fff"/><rect x="12.0" y="20.1" width="4.1" height="4.0" fill="#fff"/></svg>
<svg class="a" style="will-change:transform;left:272px;top:809px" width="18" height="30" viewBox="0 0 18 30"><rect x="1.6" y="0.9" width="14.8" height="27.9" fill="#fff"/><rect x="1.2" y="0.9" width="0.7" height="27.9" fill="#444"/><rect x="16.1" y="0.9" width="1" height="27.9" fill="#000"/><rect x="5" y="0.9" width="7.9" height="4.7" fill="#000"/><rect x="5" y="8" width="7.9" height="12.9" fill="#000"/><rect x="5" y="24" width="7.9" height="4.8" fill="#000"/><rect x="3" y="1.7" width="11.7" height="1" fill="#000"/><rect x="3" y="4.1" width="11.7" height="1" fill="#000"/><rect x="3" y="9.0" width="11.7" height="1" fill="#000"/><rect x="3" y="12.0" width="11.7" height="1" fill="#000"/><rect x="3" y="14.8" width="11.7" height="1" fill="#000"/><rect x="3" y="17.5" width="11.7" height="1" fill="#000"/><rect x="3" y="19.8" width="11.7" height="1" fill="#000"/><rect x="3" y="24.1" width="11.7" height="1" fill="#000"/><rect x="3" y="26.1" width="11.7" height="1" fill="#000"/><rect x="3" y="27.8" width="11.7" height="1" fill="#000"/></svg>
<svg class="a" style="will-change:transform;left:325px;top:810px" width="30" height="28" viewBox="0 0 30 28"><rect x="6" y="4.1" width="9.9" height="20.7" fill="#000"/><rect x="17.1" y="4.1" width="9.8" height="20.7" fill="#000"/><rect x="6" y="2" width="1.9" height="3" fill="#000"/><rect x="15" y="2" width="0.9" height="3" fill="#000"/><rect x="17.1" y="2" width="1" height="3" fill="#000"/><rect x="25" y="2" width="1.9" height="3" fill="#000"/><rect x="8" y="6.10" width="7" height="1.75" fill="#fff"/><rect x="18.1" y="6.10" width="6.9" height="1.75" fill="#fff"/><rect x="8" y="9.10" width="7" height="1.70" fill="#fff"/><rect x="18.1" y="9.10" width="6.9" height="1.70" fill="#fff"/><rect x="8" y="12.10" width="7" height="1.60" fill="#fff"/><rect x="18.1" y="12.10" width="6.9" height="1.60" fill="#fff"/><rect x="8" y="15.40" width="7" height="1.40" fill="#fff"/><rect x="18.1" y="15.40" width="6.9" height="1.40" fill="#fff"/><rect x="8" y="18.80" width="7" height="1.20" fill="#fff"/><rect x="18.1" y="18.80" width="6.9" height="1.20" fill="#fff"/><rect x="8" y="21.90" width="7" height="1.70" fill="#fff"/><rect x="18.1" y="21.90" width="6.9" height="1.70" fill="#fff"/><rect x="1.3" y="13" width="10.5" height="13.6" fill="#000"/><text x="6.6" y="25" font-family="Liberation Sans,sans-serif" font-weight="bold" font-size="12.5" fill="#fff" text-anchor="middle">4</text></svg>
<svg class="a" style="will-change:transform;left:385px;top:810px" width="28" height="28" viewBox="0 0 28 28"><rect x="1" y="5" width="10.1" height="20.9" fill="#a8a698"/><rect x="11.8" y="5" width="9.1" height="20.9" fill="#a8a698"/><rect x="1" y="2.9" width="0.9" height="3" fill="#a8a698"/><rect x="10.2" y="2.9" width="0.9" height="3" fill="#a8a698"/><rect x="2.2" y="6.90" width="7.9" height="1.40" fill="#fff"/><rect x="12.6" y="6.90" width="7.4" height="1.40" fill="#fff"/><rect x="2.2" y="10.00" width="7.9" height="1.40" fill="#fff"/><rect x="12.6" y="10.00" width="7.4" height="1.40" fill="#fff"/><rect x="2.2" y="13.00" width="7.9" height="1.70" fill="#fff"/><rect x="12.6" y="13.00" width="7.4" height="1.70" fill="#fff"/><rect x="2.2" y="16.10" width="7.9" height="1.40" fill="#fff"/><rect x="12.6" y="16.10" width="7.4" height="1.40" fill="#fff"/><rect x="2.2" y="19.60" width="7.9" height="1.20" fill="#fff"/><rect x="12.6" y="19.60" width="7.4" height="1.20" fill="#fff"/><rect x="2.2" y="22.90" width="7.9" height="1.10" fill="#fff"/><rect x="12.6" y="22.90" width="7.4" height="1.10" fill="#fff"/><rect x="15.2" y="1" width="9.7" height="12.7" fill="#a8a698"/><text x="20.1" y="12.1" font-family="Liberation Serif,serif" font-weight="bold" font-size="12.5" fill="#fff" text-anchor="middle">2</text></svg>
<div class="a" style="left:687px;top:854px;width:140px;height:14px;border:1px solid;border-color:#a09c8c #fff #fff #a09c8c"></div>
<div class="t" style="top:855px;line-height:12px;font-size:10.5px;color:#000;font-weight:bold;left:689.40px;transform-origin:0 50%;transform:translateY(0.26px) scaleX(1.0232);">Line Computer</div>
<svg class="a" style="will-change:transform;left:828px;top:856px" width="12" height="12"><path d="M11.5 1.5 L1.5 11.5 M11.5 5.5 L5.5 11.5 M11.5 9.5 L9.5 11.5" stroke="#a8a494" stroke-width="1"/><path d="M11.5 2.5 L2.5 11.5 M11.5 6.5 L6.5 11.5" stroke="#fff" stroke-width="0.8"/></svg>
</body></html>
